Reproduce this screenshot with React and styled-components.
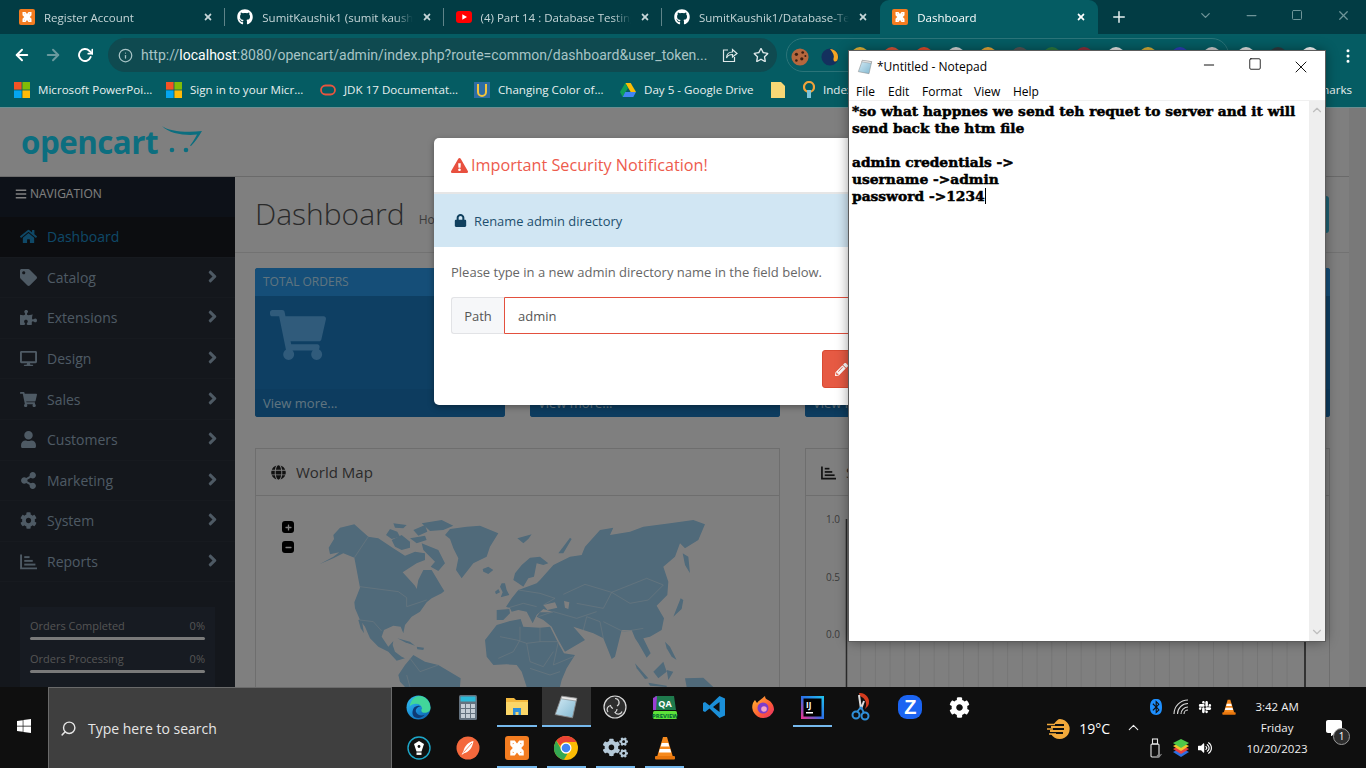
import React from "react";
import styled, { createGlobalStyle } from "styled-components";
import {
  FaHome, FaTag, FaPuzzlePiece, FaDesktop, FaShoppingCart, FaUser, FaShareAlt, FaCog, FaCogs,
  FaBars, FaAngleRight, FaGlobe, FaExclamationTriangle, FaLock, FaPencilAlt,
  FaGithub, FaWindows, FaBluetooth, FaCommentAlt, FaSlack, FaVolumeUp, FaPlus, FaMinus,
  FaRegStar, FaTimes,
} from "react-icons/fa";
import { FiArrowLeft, FiArrowRight, FiRotateCw, FiSearch, FiInfo, FiChevronDown, FiChevronUp, FiMinus, FiSquare, FiX, FiPlus, FiMoreVertical } from "react-icons/fi";

const GlobalStyle = createGlobalStyle`
  html, body { margin: 0; padding: 0; width: 1366px; height: 768px; overflow: hidden; background: #0f0f0f; }
  * { box-sizing: border-box; }
  body { font-family: "Open Sans", "Liberation Sans", sans-serif; }
`;

const Screen = styled.div`
  position: relative;
  width: 1366px;
  height: 768px;
  display: flex;
  flex-direction: column;
  overflow: hidden;
`;

/* ---------- browser chrome ---------- */
const TabStrip = styled.div`
  height: 34px;
  background: #023c44;
  display: flex;
  align-items: flex-end;
  padding-left: 7px;
  flex-shrink: 0;
`;
const Tab = styled.div`
  width: 218.3px;
  height: 34px;
  display: flex;
  align-items: center;
  padding: 0 9px 0 12px;
  color: ${({ $active }) => ($active ? "#ffffff" : "#c6d6d8")};
  background: ${({ $active }) => ($active ? "#055c63" : "transparent")};
  border-radius: ${({ $active }) => ($active ? "9px 9px 0 0" : "0")};
  font-size: 11.5px;
  position: relative;
  &::after {
    content: "";
    display: ${({ $active, $nosep }) => ($active || $nosep ? "none" : "block")};
    position: absolute;
    right: 0;
    top: 8px;
    bottom: 8px;
    width: 1px;
    background: #5f8489;
  }
`;
const TabIcon = styled.span`
  width: 16px;
  height: 16px;
  display: flex;
  align-items: center;
  justify-content: center;
  flex-shrink: 0;
  font-size: 16px;
  color: #fff;
`;
const TabTitle = styled.span`
  margin-left: 9px;
  flex: 1;
  white-space: nowrap;
  overflow: hidden;
  -webkit-mask-image: linear-gradient(to right, #000 88%, transparent 100%);
  mask-image: linear-gradient(to right, #000 88%, transparent 100%);
`;
const TabClose = styled.span`
  width: 16px;
  display: flex;
  justify-content: center;
  font-size: 10px;
  color: ${({ $active }) => ($active ? "#fff" : "#c6d6d8")};
  margin-left: 6px;
`;
const NewTab = styled.span`
  margin-left: 12px;
  height: 34px;
  display: flex;
  align-items: center;
  color: #e7efef;
  font-size: 18px;
`;
const WindowButtons = styled.div`
  margin-left: auto;
  display: flex;
  align-items: center;
  height: 30px;
  color: #6f9599;
  font-size: 15px;
  align-self: flex-start;
`;
const WindowButton = styled.span`
  width: 46px;
  display: flex;
  justify-content: center;
`;

const Toolbar = styled.div`
  height: 42px;
  background: #055c63;
  display: flex;
  align-items: center;
  flex-shrink: 0;
  padding-left: 13px;
`;
const NavButton = styled.span`
  width: ${({ $w }) => $w || 31}px;
  flex-shrink: 0;
  display: flex;
  color: ${({ $off }) => ($off ? "#6a9a9e" : "#ffffff")};
  font-size: 18px;
`;
const UrlPill = styled.div`
  width: 669px;
  height: 34px;
  flex-shrink: 0;
  border-radius: 17px;
  background: #0f4a50;
  display: flex;
  align-items: center;
  padding-left: 10px;
  color: #a8c4c6;
  font-family: "Roboto", sans-serif;
  font-size: 14px;
  white-space: nowrap;
`;
const UrlText = styled.span`
  margin-left: 8px;
  width: 573px;
  letter-spacing: 0.02px;
  b { color: #fff; font-weight: 400; }
`;
const UrlAction = styled.span`
  display: flex;
  width: 31px;
  justify-content: center;
  color: #dfe9ea;
  font-size: 16px;
`;
const ExtensionPill = styled.div`
  margin-left: 9px;
  width: 443px;
  height: 34px;
  flex-shrink: 0;
  border-radius: 17px;
  border: 1px solid #2b7479;
  display: flex;
  align-items: center;
  padding: 2px 0 0 4px;
`;
const ExtDot = styled.span`
  width: 18px;
  height: 18px;
  display: flex;
  border-radius: 50% 50% 2px 2px;
  background: ${({ $c }) => $c};
  flex-shrink: 0;
  margin-right: ${({ $gap }) => ($gap === undefined ? 14 : $gap)}px;
`;
const AfterPill = styled.div`
  display: flex;
  align-items: center;
  margin-left: 8px;
  padding-top: 2px;
  gap: 14px;
  flex-shrink: 0;
`;
const KebabIcon = styled.span`
  margin-left: 6px;
  color: #fff;
  font-size: 18px;
  display: flex;
`;

const BookmarksBar = styled.div`
  height: 32px;
  background: #055c63;
  border-bottom: 1px solid #6b8e91;
  display: flex;
  align-items: center;
  padding: 0 0 4px 14px;
  color: #e8f0f0;
  font-size: 11.6px;
  flex-shrink: 0;
  white-space: nowrap;
`;
const Bookmark = styled.span`
  display: flex;
  align-items: center;
  width: ${({ $w }) => $w}px;
  flex-shrink: 0;
  gap: 8px;
`;
const BookmarkEnd = styled.span`
  margin-left: auto;
  margin-right: 14px;
`;

/* ---------- dimmed admin page ---------- */
const Page = styled.div`
  position: relative;
  flex: 1;
  display: flex;
  min-height: 0;
  overflow: hidden;
  background: #fff;
  color: #555;
`;
const PageMain = styled.div`
  width: 1349px;
  display: flex;
  flex-direction: column;
  flex-shrink: 0;
`;
const PageScroll = styled.div`
  width: 17px;
  background: #f3f3f3;
`;
const AdminHeader = styled.div`
  height: 69px;
  border-bottom: 1px solid #d4d4d4;
  display: flex;
  align-items: center;
  padding-left: 21px;
  flex-shrink: 0;
`;
const LogoText = styled.span`
  font-family: "Open Sans", sans-serif;
  font-weight: 700;
  font-size: 31.3px;
  letter-spacing: -0.5px;
  color: #18dcff;
  line-height: 1;
  margin-top: 2px;
`;
const LogoMark = styled.span`
  display: flex;
  margin: 0 0 4px 3px;
`;
const AdminBody = styled.div`
  flex: 1;
  display: flex;
  min-height: 0;
`;
const Sidebar = styled.aside`
  width: 235px;
  flex-shrink: 0;
  background: #282e38;
`;
const NavHead = styled.div`
  height: 40px;
  background: #1a2230;
  color: #fff;
  font-size: 12px;
  display: flex;
  align-items: flex-start;
  padding: 8px 0 0 15px;
  gap: 3px;
  svg { margin-top: 3px; font-size: 12px; }
`;
const NavItem = styled.div`
  height: 40.6px;
  display: flex;
  align-items: center;
  padding: 0 13px 0 20px;
  font-size: 14px;
  border-bottom: 1px solid #2f353f;
  background: ${({ $active }) => ($active ? "#181b20" : "transparent")};
  color: ${({ $active }) => ($active ? "#1e91cf" : "#9db4c8")};
`;
const NavIcon = styled.span`
  width: 27px;
  display: flex;
  font-size: 17px;
`;
const NavLabel = styled.span`
  flex: 1;
`;
const NavArrow = styled.span`
  display: flex;
  font-size: 19px;
  margin-top: -2px;
`;
const StatsBox = styled.div`
  margin: 25px 20px 0;
  padding: 11px 10px 0;
  background: #2e3644;
  height: 90px;
`;
const StatRow = styled.div`
  display: flex;
  justify-content: space-between;
  font-size: 11px;
  color: #a8a8a8;
  line-height: 16px;
`;
const StatBar = styled.div`
  height: 3px;
  background: #f5f5f5;
  border-radius: 2px;
  margin: 3px 0 11px;
`;
const Content = styled.main`
  flex: 1;
  padding: 0 19px 0 20px;
  min-width: 0;
`;
const PageHead = styled.div`
  height: 76px;
  margin: 0 -19px 15px -20px;
  padding: 16px 20px 0 20px;
  border-bottom: 1px solid #e4e4e4;
  display: flex;
  align-items: flex-start;
`;
const PageTitle = styled.h1`
  margin: 0;
  font-size: 30px;
  font-weight: 300;
  color: #555;
  line-height: 41px;
`;
const Breadcrumb = styled.span`
  margin: 0 0 0 14px;
  font-size: 12px;
  color: #777;
  line-height: 53px;
`;
const DevButton = styled.span`
  margin-left: auto;
  margin-top: 3px;
  width: 40px;
  height: 37px;
  border-radius: 3px;
  background: #3fc4e6;
`;
const TileRow = styled.div`
  display: grid;
  grid-template-columns: repeat(4, 1fr);
  gap: 25px;
`;
const Tile = styled.div`
  height: 149px;
  border-radius: 3px;
  overflow: hidden;
  background: #1c7ec6;
  display: flex;
  flex-direction: column;
  color: #c0e8ff;
  font-size: 12px;
`;
const TileHead = styled.div`
  height: 28px;
  background: #2a9cf0;
  padding: 6px 8px;
  line-height: 16px;
  text-transform: uppercase;
`;
const TileBody = styled.div`
  flex: 1;
  padding: 11px 15px;
  font-size: 56px;
  color: #60b6f6;
  display: flex;
`;
const TileFoot = styled.div`
  height: 28px;
  background: #1a78bf;
  padding: 6px 8px;
  line-height: 16px;
  font-size: 13px;
`;
const PanelRow = styled.div`
  display: grid;
  grid-template-columns: repeat(2, 525px);
  gap: 25px;
  margin-top: 31px;
`;
const Panel = styled.section`
  border: 1px solid #dcdcdc;
  height: 260px;
  position: relative;
`;
const PanelHead = styled.div`
  height: 47px;
  border-bottom: 1px solid #dcdcdc;
  display: flex;
  align-items: center;
  padding-left: 15px;
  gap: 10px;
  font-size: 15px;
  color: #555;
  svg { font-size: 15px; color: #222; }
`;
const MapBody = styled.div`
  padding: 19px 0 0 54px;
`;
const MapZoom = styled.span`
  position: absolute;
  left: 26px;
  top: ${({ $top }) => $top}px;
  width: 12px;
  height: 12px;
  border-radius: 3px;
  background: #000;
  color: #fff;
  display: flex;
  align-items: center;
  justify-content: center;
  font-size: 7px;
`;
const Backdrop = styled.div`
  position: absolute;
  inset: 0;
  background: rgba(0, 0, 0, 0.5);
`;

/* ---------- modal ---------- */
const Modal = styled.div`
  position: absolute;
  left: 434px;
  top: 30px;
  width: 500px;
  height: 267px;
  background: #fff;
  border-radius: 5px;
  box-shadow: 0 2px 6px rgba(0, 0, 0, 0.35);
  overflow: hidden;
  display: flex;
  flex-direction: column;
`;
const ModalTitle = styled.div`
  height: 56px;
  border-bottom: 2px solid #e6e6e6;
  color: #ed5b4d;
  font-size: 16.2px;
  display: flex;
  align-items: center;
  padding: 0 17px;
  gap: 3px;
  svg { font-size: 17px; color: #e8503f; }
`;
const AlertBar = styled.div`
  height: 53px;
  background: #d1e6f3;
  color: #1d4f6e;
  font-size: 12.9px;
  display: flex;
  align-items: center;
  padding-left: 20px;
  gap: 7px;
  svg { font-size: 13px; color: #10405e; }
`;
const ModalBody = styled.div`
  padding: 16px 17px 0;
  font-size: 13px;
  color: #666;
`;
const ModalNote = styled.p`
  margin: 0;
  line-height: 18px;
`;
const InputGroup = styled.div`
  display: flex;
  height: 37px;
  margin-top: 16px;
`;
const InputAddon = styled.span`
  width: 53px;
  background: #f6f7f9;
  border: 1px solid #e2e3e6;
  border-right: 0;
  border-radius: 3px 0 0 3px;
  display: flex;
  align-items: center;
  justify-content: center;
  color: #555;
`;
const InputField = styled.span`
  flex: 1;
  border: 1px solid #e3503e;
  border-radius: 0 3px 3px 0;
  display: flex;
  align-items: center;
  padding-left: 13px;
  color: #555;
`;
const ModalFoot = styled.div`
  display: flex;
  justify-content: flex-end;
  padding: 16px 17px 0;
`;
const DangerButton = styled.span`
  width: 95px;
  height: 38px;
  background: #e65a43;
  border: 1px solid #d94a32;
  border-radius: 3px;
  color: #fff;
  display: flex;
  align-items: center;
  padding-left: 12px;
  font-size: 13px;
`;

/* ---------- notepad window ---------- */
const Notepad = styled.div`
  position: absolute;
  left: 849px;
  top: 51px;
  width: 476px;
  height: 590px;
  background: #fff;
  box-shadow: 0 0 0 1px #5c5c5c, 0 0 12px rgba(0, 0, 0, 0.45);
  display: flex;
  flex-direction: column;
  color: #000;
`;
const NoteTitleBar = styled.div`
  height: 31px;
  display: flex;
  align-items: center;
  padding-left: 8px;
  font-family: "Open Sans", sans-serif;
  font-size: 12px;
  gap: 4px;
`;
const NoteControls = styled.div`
  margin-left: auto;
  display: flex;
  margin-right: 1px;
`;
const NoteControl = styled.span`
  width: 46px;
  display: flex;
  justify-content: center;
  font-size: ${({ $s }) => $s || 16}px;
`;
const NoteMenu = styled.div`
  height: 19px;
  display: flex;
  align-items: center;
  font-size: 12px;
  padding-left: 7px;
  border-bottom: 1px solid #f0f0f0;
`;
const NoteMenuItem = styled.span`
  width: ${({ $w }) => $w}px;
`;
const NoteBody = styled.div`
  flex: 1;
  display: flex;
  min-height: 0;
`;
const NoteText = styled.pre`
  flex: 1;
  margin: 0;
  padding: 2px 0 0 3px;
  font-family: "DejaVu Serif", "Liberation Serif", serif;
  font-weight: 700;
  font-size: 13.8px;
  line-height: 17px;
  white-space: pre;
  -webkit-text-stroke: 0.5px #000;
`;
const Caret = styled.span`
  display: inline-block;
  width: 1px;
  height: 16px;
  background: #000;
  vertical-align: -3px;
`;
const NoteScroll = styled.div`
  width: 16px;
  background: #eeeeee;
  display: flex;
  flex-direction: column;
  justify-content: space-between;
  align-items: center;
  color: #bdbdbd;
  font-size: 14px;
  padding: 2px 0;
`;

/* ---------- taskbar ---------- */
const Taskbar = styled.div`
  height: 81px;
  flex-shrink: 0;
  background: #0f0f0f;
  display: flex;
  color: #fff;
`;
const StartButton = styled.div`
  width: 48px;
  display: flex;
  align-items: center;
  justify-content: center;
  font-size: 16px;
  padding-bottom: 4px;
`;
const SearchBox = styled.div`
  width: 344px;
  background: #3f3f3f;
  border: 1px solid #6a6a6a;
  border-bottom: 0;
  display: flex;
  align-items: center;
  padding: 0 0 0 11px;
  gap: 11px;
  font-size: 14px;
  color: #e6e6e6;
  svg { font-size: 17px; transform: scaleX(-1); }
`;
const TaskGrid = styled.div`
  display: grid;
  grid-template-columns: repeat(12, 49.2px);
  grid-template-rows: 40px 41px;
  margin-left: 2px;
`;
const TaskCell = styled.div`
  position: relative;
  display: flex;
  align-items: center;
  justify-content: center;
  background: ${({ $active }) => ($active ? "#333333" : "transparent")};
  &::after {
    content: "";
    display: ${({ $open }) => ($open ? "block" : "none")};
    position: absolute;
    left: ${({ $active }) => ($active ? 0 : 5)}px;
    right: ${({ $active }) => ($active ? 0 : 5)}px;
    bottom: 0;
    height: 2px;
    background: #76b9ed;
  }
`;
const Weather = styled.div`
  margin-left: 63px;
  display: flex;
  align-items: center;
  gap: 6px;
  font-size: 14px;
  padding-top: 2px;
`;
const TrayChevron = styled.span`
  margin-left: 15px;
  display: flex;
  align-self: center;
  font-size: 17px;
  color: #eee;
`;
const Tray = styled.div`
  margin-left: 2px;
  width: 97px;
  display: grid;
  grid-template-columns: repeat(4, 24.3px);
  grid-template-rows: 40px 41px;
  justify-items: center;
  align-items: center;
  font-size: 14px;
`;
const Clock = styled.div`
  width: 72px;
  display: flex;
  flex-direction: column;
  align-items: center;
  justify-content: center;
  gap: 5px;
  font-size: 11.5px;
  line-height: 16px;
  color: #f0f0f0;
`;
const Notify = styled.div`
  position: relative;
  margin-left: 13px;
  align-self: center;
  font-size: 16px;
  display: flex;
`;
const NotifyBadge = styled.span`
  position: absolute;
  right: -8px;
  bottom: -9px;
  width: 17px;
  height: 17px;
  border-radius: 50%;
  background: #2d2d2d;
  border: 1px solid #999;
  font-size: 10px;
  display: flex;
  align-items: center;
  justify-content: center;
`;

/* ---------- drawn icons ---------- */
const Xampp = ({ size = 16 }) => (
  <svg width={size} height={size} viewBox="0 0 16 16">
    <rect width="16" height="16" rx="2" fill="#f37c20" />
    <path d="M3.5 3h3L8 5l1.5-2h3v3.2L10.8 8l1.7 1.8V13h-3L8 11l-1.5 2h-3V9.800L5.200 8 3.500 6.200z" fill="#fff" />
    <path d="M5.200 4.600h.8L5.200 5.600zM10 4.600h.8v1zM5.200 11.400h.8l-.8-1zM10 11.400h.8v-1z" fill="#f37c20" />
  </svg>
);
const YouTube = () => (
  <svg width="16" height="12" viewBox="0 0 16 12">
    <rect width="16" height="12" rx="3" fill="#f00" />
    <path d="M6.300 3.300v5.400L11 6z" fill="#fff" />
  </svg>
);
const MsLogo = () => (
  <svg width="16" height="16" viewBox="0 0 16 16">
    <rect width="7.600" height="7.600" fill="#f35325" />
    <rect x="8.400" width="7.600" height="7.600" fill="#81bc06" />
    <rect y="8.400" width="7.600" height="7.600" fill="#05a6f0" />
    <rect x="8.400" y="8.400" width="7.600" height="7.600" fill="#ffba08" />
  </svg>
);
const OracleOval = () => (
  <svg width="16" height="12" viewBox="0 0 16 12">
    <rect x="1" y="1.500" width="14" height="9" rx="4.500" fill="none" stroke="#e8553f" strokeWidth="1.800" />
  </svg>
);
const UdemyBook = () => (
  <svg width="16" height="16" viewBox="0 0 16 16">
    <rect width="16" height="16" fill="#2e6da4" />
    <path d="M4 2v8a4 4 0 0 0 8 0V2" fill="none" stroke="#f3c53c" strokeWidth="2" />
  </svg>
);
const DriveIcon = () => (
  <svg width="16" height="14" viewBox="0 0 16 14">
    <path d="M5.300 0h5.400l5.300 9h-5.300z" fill="#fbbc04" />
    <path d="M5.300 0L0 9l2.700 5 5.300-9z" fill="#0f9d58" />
    <path d="M2.700 14h10.600l2.700-5H5.300z" fill="#4285f4" />
  </svg>
);
const FolderNote = () => (
  <svg width="14" height="16" viewBox="0 0 14 16">
    <path d="M0 0h10l4 4v12H0z" fill="#f8d775" />
  </svg>
);
const PinIcon = () => (
  <svg width="12" height="18" viewBox="0 0 12 18">
    <circle cx="6" cy="6" r="5" fill="none" stroke="#f2a33a" strokeWidth="2.200" />
    <rect x="4" y="9" width="4" height="8" fill="#7ec4d8" />
  </svg>
);
const ShareIcon = () => (
  <svg width="16" height="16" viewBox="0 0 16 16" fill="none" stroke="#dfe9ea" strokeWidth="1.200">
    <path d="M6 3H1.500v11.500h11V10" />
    <path d="M4.500 11c0-4 3-6 6-6V2.500L15 6.500 10.500 10V7.500c-2.500 0-5 1-6 3.500z" />
  </svg>
);
const Cookie = () => (
  <svg width="20" height="20" viewBox="0 0 20 20">
    <circle cx="10" cy="10" r="9.500" fill="#b5673e" />
    <circle cx="6" cy="7" r="1.800" fill="#3c1f12" /><circle cx="13" cy="5" r="1.500" fill="#3c1f12" />
    <circle cx="12" cy="12" r="1.800" fill="#3c1f12" /><circle cx="6" cy="14" r="1.400" fill="#3c1f12" />
    <circle cx="16" cy="9" r="1.100" fill="#3c1f12" />
  </svg>
);
const SwirlExt = () => (
  <svg width="20" height="20" viewBox="0 0 20 20">
    <circle cx="10" cy="10" r="9.500" fill="#14305e" />
    <path d="M10 1a9 9 0 0 1 8 13c-2 2-5 1-4-3 1-3-1-6-4-10z" fill="#f5a623" />
  </svg>
);
const PadIcon = ({ size = 16 }) => (
  <svg width={size} height={size} viewBox="0 0 24 24">
    <defs>
      <linearGradient id={`pad${size}`} x1="0" y1="0" x2="1" y2="1">
        <stop offset="0" stopColor="#d6ecf6" /><stop offset="1" stopColor="#7fb6cf" />
      </linearGradient>
    </defs>
    <path d="M8 2l14 2-4 18-16-3z" fill={`url(#pad${size})`} stroke="#8a8a8a" strokeWidth="0.800" />
    <path d="M8 2l14 2-.6 2.500L7.300 4.400z" fill="#e9e9e9" stroke="#777" strokeWidth="0.500" />
  </svg>
);
const AxisBars = () => (
  <svg width="1em" height="1em" viewBox="0 0 16 16" fill="currentColor">
    <path d="M1 1.500v13h15" fill="none" stroke="currentColor" strokeWidth="1.800" />
    <rect x="4" y="3" width="5" height="1.800" /><rect x="4" y="6.500" width="8" height="1.800" /><rect x="4" y="10" width="10.500" height="1.800" />
  </svg>
);
const EdgeIcon = () => (
  <svg width="25" height="25" viewBox="0 0 24 24">
    <defs>
      <linearGradient id="edgeA" x1="0" y1="0" x2="1" y2="1">
        <stop offset="0" stopColor="#35c1f1" /><stop offset="0.500" stopColor="#1b8fd8" /><stop offset="1" stopColor="#0c59a4" />
      </linearGradient>
    </defs>
    <circle cx="12" cy="12" r="11.500" fill="url(#edgeA)" />
    <path d="M13 1a11 11 0 0 1 10.500 11.500c0 3-3 5-6.500 4.500-3-.5-2.500-3-1.500-4-.5-3-3-4.500-6-4.500C7 8.500 5 9.500 3.500 11 4.500 5 8 1 13 1z" fill="#42d69a" />
    <path d="M9.500 16c1 3 5 4.500 8.500 3-2 3-7 4-10 2-2-1.500-2.500-5-.5-8.500 1.500-2 4.500-3 7-1.500-3 0-5.500 2-5 5z" fill="#0e3a75" />
  </svg>
);
const CalcIcon = () => (
  <svg width="18" height="25" viewBox="0 0 18 25">
    <rect width="18" height="25" rx="1.500" fill="#64727f" />
    <rect x="1.500" y="1.500" width="15" height="5" fill="#2bb9d8" />
    {[0, 1, 2].map((c) =>
      [0, 1, 2].map((r) => <rect key={`${c}${r}`} x={2 + c * 5} y={9 + r * 5} width="4" height="4" fill="#c5ced6" />)
    )}
  </svg>
);
const FolderIcon = () => (
  <svg width="22" height="20" viewBox="0 0 22 20">
    <path d="M0 1h8l2 2h12v15H0z" fill="#f3b93f" />
    <path d="M0 5h22v13H0z" fill="#fbd668" />
    <path d="M7 11h8v7h-2.500v-3h-3v3H7z" fill="#2f8fd8" />
  </svg>
);
const ObsIcon = () => (
  <svg width="24" height="24" viewBox="0 0 24 24" fill="none" stroke="#d8d8d8" strokeWidth="1.200">
    <circle cx="12" cy="12" r="11" fill="#2d2d2d" />
    <path d="M12 3.500a4 4 0 0 1 2 7.500M5 17a4 4 0 0 1 2.500-6.500 4 4 0 0 0 2.500 3M19 16.500a4 4 0 0 1-7 1 4 4 0 0 0 2-3.500" />
  </svg>
);
const QaIcon = () => (
  <svg width="26" height="26" viewBox="0 0 26 26">
    <path d="M3 2h19l2 14H2z" fill="#1f7a4d" />
    <path d="M1 4l4-2-1 14H1z" fill="#9b3fd4" />
    <text x="13" y="13" fontSize="9" fontWeight="700" fill="#fff" textAnchor="middle" fontFamily="Open Sans">QA</text>
    <rect x="1" y="17" width="24" height="8" rx="1.500" fill="#5de23a" />
    <text x="13" y="23.500" fontSize="6" fontWeight="700" fill="#063" textAnchor="middle" fontFamily="Open Sans">PREVIEW</text>
  </svg>
);
const CodeIcon = () => (
  <svg width="24" height="24" viewBox="0 0 24 24">
    <path d="M17.500 1L23 3.500v17L17.500 23l-10-9.500L3 17l-2-1V8l2-1 4.500 3.500zM17.500 7L11 12l6.500 5z" fill="#1b8fd8" />
  </svg>
);
const FoxIcon = () => (
  <svg width="24" height="24" viewBox="0 0 24 24">
    <defs>
      <linearGradient id="foxA" x1="0" y1="0" x2="1" y2="1">
        <stop offset="0" stopColor="#ffbd2e" /><stop offset="0.600" stopColor="#ff5a36" /><stop offset="1" stopColor="#e32b73" />
      </linearGradient>
    </defs>
    <path d="M12 23a11 11 0 0 1-10-15c1-2 2-3 2-3l2 3c2-3 5-4 8-7 0 2 1 3 3 4 4 2 6 6 6 10a11 11 0 0 1-11 8z" fill="url(#foxA)" />
    <circle cx="12" cy="13" r="5.500" fill="#7d3cc9" />
    <circle cx="13" cy="14" r="2.800" fill="#f5a5c8" />
  </svg>
);
const IdeaIcon = () => (
  <svg width="23" height="23" viewBox="0 0 23 23">
    <defs>
      <linearGradient id="ideaA" x1="0" y1="1" x2="1" y2="0">
        <stop offset="0" stopColor="#f72f8e" /><stop offset="0.500" stopColor="#2b6fe6" /><stop offset="1" stopColor="#20c8f0" />
      </linearGradient>
    </defs>
    <rect width="23" height="23" fill="url(#ideaA)" />
    <rect x="2.500" y="2.500" width="18" height="18" fill="#000" />
    <text x="5" y="12" fontSize="8" fontWeight="700" fill="#fff" fontFamily="Open Sans">IJ</text>
    <rect x="5" y="16" width="7" height="1.500" fill="#fff" />
  </svg>
);
const SnipIcon = () => (
  <svg width="20" height="30" viewBox="0 0 20 30">
    <path d="M8 1a9 9 0 0 1 9 13l-3 3c3-6 0-11-5-13z" fill="#d43b1e" />
    <path d="M8 3l2 14M13 9l-3 8" stroke="#ddd" strokeWidth="2" />
    <circle cx="5" cy="23" r="3.500" fill="none" stroke="#2f8fd8" strokeWidth="2" />
    <circle cx="14" cy="24" r="3.500" fill="none" stroke="#2f8fd8" strokeWidth="2" />
    <path d="M6 20l4-5M13 21l-3-6" stroke="#2f8fd8" strokeWidth="1.800" />
  </svg>
);
const ZoomZ = styled.span`
  width: 24px;
  height: 24px;
  border-radius: 9px;
  background: #1b64f2;
  color: #fff;
  font: 700 20px "Liberation Sans", sans-serif;
  display: flex;
  align-items: center;
  justify-content: center;
`;
const PenIcon = () => (
  <svg width="24" height="24" viewBox="0 0 24 24">
    <circle cx="12" cy="12" r="11" fill="#111" stroke="#1da7c9" strokeWidth="1.400" />
    <path d="M7 8l5-3 5 3-2.500 7.500h-5z" fill="#fff" />
    <circle cx="12" cy="10.500" r="1.400" fill="#111" />
    <rect x="9.500" y="16.500" width="5" height="2.400" fill="#fff" />
  </svg>
);
const FeatherIcon = () => (
  <svg width="24" height="24" viewBox="0 0 24 24">
    <circle cx="12" cy="12" r="11.500" fill="#f4683c" />
    <path d="M17.500 5c-5 1-9 5-10 10l-2 4 3-2c5-1 8-6 9-12z" fill="#fff" />
    <path d="M16 7l-8.500 9.500" stroke="#f4683c" strokeWidth="0.800" />
  </svg>
);
const ChromeIcon = () => (
  <svg width="24" height="24" viewBox="0 0 24 24">
    <circle cx="12" cy="12" r="12" fill="#fbbc04" />
    <path d="M12 0a12 12 0 0 1 10.400 6H12a6 6 0 0 0-5.700 4L2.300 4.800A12 12 0 0 1 12 0z" fill="#ea4335" />
    <path d="M2.300 4.800l5 8.600a6 6 0 0 0 6.200 4.400L9.800 23.800A12 12 0 0 1 2.300 4.800z" fill="#34a853" />
    <circle cx="12" cy="12" r="5.500" fill="#fff" /><circle cx="12" cy="12" r="4.300" fill="#4285f4" />
  </svg>
);
const Cone = ({ size = 24 }) => (
  <svg width={size} height={size} viewBox="0 0 24 24">
    <path d="M10 1h4l6 20H4z" fill="#f68a1e" />
    <path d="M8.700 7h6.600l1 3.500H7.700zM6.800 13h10.400l1 3.500H5.800z" fill="#fff" />
    <rect x="2" y="20" width="20" height="3.500" rx="1" fill="#e8760c" />
  </svg>
);
const GearsIcon = styled(FaCogs)`
  font-size: 25px;
  color: #b5c9d8;
`;
const WhiteGear = styled(FaCog)`
  font-size: 21px;
  color: #fff;
`;
const WeatherIcon = () => (
  <svg width="26" height="26" viewBox="0 0 26 26">
    <path d="M13 3a10 10 0 1 1-9 15h12v-2H3v-2h14v-2H4v-2h13V8H7c2-3 4-5 6-5z" fill="#f2a93b" />
    <path d="M0 8.500h8M0 13h6M2 18h7" stroke="#f2a93b" strokeWidth="1.400" />
  </svg>
);
const WifiIcon = () => (
  <svg width="16" height="16" viewBox="0 0 16 16" fill="none" stroke="#d8d8d8" strokeWidth="1.100">
    <path d="M1 15A14 14 0 0 1 15 1M4.500 15A10.500 10.500 0 0 1 15 4.500M8 15a7 7 0 0 1 7-7M11 15a4 4 0 0 1 4-4" />
  </svg>
);
const UsbIcon = () => (
  <svg width="12" height="20" viewBox="0 0 12 20" fill="none" stroke="#e8e8e8" strokeWidth="1.100">
    <rect x="1" y="6" width="8" height="13" rx="1" /><rect x="2.500" y="1" width="5" height="5" />
    <path d="M7 17l2 2 2.500-3" stroke="#888" />
  </svg>
);
const BlueStacks = () => (
  <svg width="18" height="20" viewBox="0 0 18 20">
    <path d="M9 10l8 4-8 5-8-5z" fill="#2d6fe0" />
    <path d="M9 7l8 4-8 5-8-5z" fill="#e84040" />
    <path d="M9 4l8 4-8 5-8-5z" fill="#f2c32c" />
    <path d="M9 1l8 4-8 5-8-5z" fill="#4ec84a" />
  </svg>
);
const Swoosh = () => (
  <svg width="42" height="30" viewBox="0 0 42 30">
    <path d="M1 1c6 5 24 7 40 5-3 5-7 11-11 15l-1-.5c3-4 5-7 7-11C26 11 8 9 1 1z" fill="#18dcff" />
    <circle cx="11" cy="25" r="2.300" fill="#18dcff" /><circle cx="25" cy="25" r="2.300" fill="#18dcff" />
  </svg>
);

/* ---------- map and chart ---------- */
const landShapes = [
  "M56 98L72 72 70 60 90 38 133 28 175 65 205 70 250 100 285 122 315 110 345 115 345 135 320 145 278 172 315 212 320 222 325 195 340 165 365 165 395 215 403 228 395 235 365 250 350 262 330 290 305 305 285 330 280 355 272 335 250 332 222 345 215 365 235 395 250 378 248 390 255 410 275 425 285 430 260 437 235 410 205 395 180 370 165 335 150 315 135 280 133 262 150 218 140 165 133 128 100 115 70 130 28 148 70 125 88 112 60 118Z",
  "M145 315L155 312 162 355 152 340Z",
  "M228 60L240 42 262 50 270 65 245 72Z",
  "M250 25L290 30 280 40 255 38Z",
  "M245 75L275 60 300 80 300 98 275 105 255 95Z",
  "M310 45L345 30 352 50 325 62Z",
  "M335 25L395 15 430 32 400 45 360 48Z",
  "M300 70L345 62 350 75 320 85Z",
  "M335 85L385 105 405 145 385 168 362 155 375 140 340 105Z",
  "M405 60L420 42 470 35 510 32 565 55 540 95 530 125 490 145 455 190 438 165 445 130 430 100 420 72Z",
  "M518 162L535 155 550 165 535 177 520 170Z",
  "M575 205L585 205 590 225 598 240 572 247 578 232 570 215Z",
  "M555 230L565 222 570 232 558 238Z",
  "M622 70L665 58 655 72 640 85Z",
  "M610 195L615 175 635 150 660 128 690 125 715 145 700 150 680 145 672 185 655 190 640 215 625 205Z",
  "M745 115L780 68 785 72 760 115Z",
  "M690 195L730 150 780 125 815 120 825 95 870 45 910 38 900 60 960 50 1000 35 1080 25 1150 15 1185 28 1165 75 1125 100 1110 85 1095 125 1060 155 1075 200 1072 240 1040 272 1062 310 1055 345 1020 365 1000 370 1022 415 1010 428 985 385 975 370 965 345 935 345 915 425 905 432 880 370 850 355 820 345 790 335 825 375 765 410 745 375 725 335 700 315 680 305 690 292 730 292 700 282 680 300 668 325 650 290 625 285 605 290 600 280 588 275 605 250 625 225 680 205Z",
  "M560 285L598 282 600 295 580 315 560 315Z",
  "M525 375L560 330 600 318 632 312 640 335 690 338 720 335 745 385 762 415 795 420 770 460 755 495 750 516 650 516 635 470 620 450 590 448 550 450 530 425Z",
  "M265 480L285 450 310 420 345 440 385 450 452 490 450 516 285 516 270 500Z",
  "M262 370L300 380 315 392 285 382Z",
  "M320 395L342 398 340 405 322 403Z",
  "M1118 115L1135 125 1140 175 1125 150Z",
  "M1090 305L1115 282 1120 255 1112 250 1100 280Z",
  "M1030 470L1060 440 1070 470 1045 490Z",
  "M975 445L1015 490 1005 492 980 460Z",
  "M1065 380L1080 395 1100 435 1085 425 1070 400Z",
  "M1070 465L1090 470 1075 495Z",
  "M1125 490L1180 488 1210 516 1130 516Z",
  "M1015 503L1070 512 1070 516 1020 512Z",
];
const borderLines = [
  "M175 65L133 128",
  "M150 215L265 230 290 248 290 275 350 255",
  "M150 315L190 320 215 348",
  "M905 232L1010 190 1060 210 1015 255 960 265 905 232",
  "M760 238L825 208 905 232 880 280 800 265",
  "M685 305L730 290 800 310 860 290",
  "M820 345L830 305 870 320 880 370",
  "M880 320L940 350 1000 340",
  "M625 225L690 235 735 250 700 270",
  "M590 280L640 265 680 275",
  "M570 365L620 375 650 385 690 380 690 338",
  "M630 335L630 375 610 410 565 430",
  "M650 385L660 440 700 455 730 410",
  "M690 380L745 380 730 450 790 425",
  "M660 460L720 480 750 470",
  "M300 430L330 470 385 450",
  "M290 480L300 516",
];

const WorldMap = () => (
  <svg width="410" height="172" viewBox="0 0 1230 516">
    {landShapes.map((d, i) => (
      <path key={i} d={d} fill="#a0d4f4" />
    ))}
    <path d="M700 270L735 262 742 278 712 285Z" fill="#fff" />
    <path d="M762 258L778 262 775 282 765 278Z" fill="#fff" />
    {borderLines.map((d, i) => (
      <path key={i} d={d} fill="none" stroke="#d6f0ff" strokeWidth="2" />
    ))}
  </svg>
);

const ChartLabel = styled.text`
  font: 10px "Open Sans", sans-serif;
  fill: #777;
`;
const gridLines = Array.from({ length: 31 }, (_, i) => 846 + i * 14.7);

const SalesChart = () => (
  <svg width="523" height="195" viewBox="806 497 523 195">
    {gridLines.map((x) => (
      <line key={x} x1={x} x2={x} y1="520" y2="692" stroke="#ececec" />
    ))}
    <line x1="846.500" x2="846.500" y1="520" y2="692" stroke="#555" strokeWidth="1.500" />
    <line x1="1305" x2="1305" y1="520" y2="692" stroke="#333" strokeWidth="1.500" />
    <ChartLabel x="826" y="524">1.0</ChartLabel>
    <ChartLabel x="826" y="582">0.5</ChartLabel>
    <ChartLabel x="826" y="639">0.0</ChartLabel>
  </svg>
);

/* ---------- data ---------- */
const tabs = [
  { title: "Register Account", icon: <Xampp /> },
  { title: "SumitKaushik1 (sumit kaushik)", icon: <FaGithub /> },
  { title: "(4) Part 14 : Database Testing", icon: <YouTube /> },
  { title: "SumitKaushik1/Database-Testing", icon: <FaGithub />, nosep: true },
  { title: "Dashboard", icon: <Xampp />, active: true },
];
const bookmarks = [
  { label: "Microsoft PowerPoi...", icon: <MsLogo />, w: 152 },
  { label: "Sign in to your Micr...", icon: <MsLogo />, w: 154 },
  { label: "JDK 17 Documentat...", icon: <OracleOval />, w: 154 },
  { label: "Changing Color of...", icon: <UdemyBook />, w: 146 },
  { label: "Day 5 - Google Drive", icon: <DriveIcon />, w: 151 },
  { label: "", icon: <FolderNote />, w: 32 },
  { label: "Index", icon: <PinIcon />, w: 60 },
];
const navItems = [
  { label: "Catalog", icon: <FaTag /> },
  { label: "Extensions", icon: <FaPuzzlePiece /> },
  { label: "Design", icon: <FaDesktop /> },
  { label: "Sales", icon: <FaShoppingCart /> },
  { label: "Customers", icon: <FaUser /> },
  { label: "Marketing", icon: <FaShareAlt /> },
  { label: "System", icon: <FaCog /> },
  { label: "Reports", icon: <AxisBars /> },
];
const tiles = ["Total Orders", "", "", ""];
const extColors = ["#e8b83a", "#d8553a", "#e14b2b", "#d8d8d8", "#e8a93a", "#555", "#2d7a3e", "#8d2f3b", "#e8e8e8", "#d8b13a", "#2d3fb8", "#d0d0d0"];
const taskIcons = [
  { el: <EdgeIcon /> }, { el: <CalcIcon /> }, { el: <FolderIcon />, open: true }, { el: <PadIcon size={26} />, open: true, active: true },
  { el: <ObsIcon /> }, { el: <QaIcon /> }, { el: <CodeIcon /> }, { el: <FoxIcon /> }, { el: <IdeaIcon />, open: true },
  { el: <SnipIcon /> }, { el: <ZoomZ>Z</ZoomZ> }, { el: <WhiteGear /> },
  { el: <PenIcon /> }, { el: <FeatherIcon /> }, { el: <Xampp size={24} />, open: true }, { el: <ChromeIcon />, open: true },
  { el: <GearsIcon />, open: true }, { el: <Cone />, open: true },
];

const App = () => (
  <Screen>
    <GlobalStyle />
    <TabStrip>
      {tabs.map((t) => (
        <Tab key={t.title} $active={t.active} $nosep={t.nosep}>
          <TabIcon>{t.icon}</TabIcon>
          <TabTitle>{t.title}</TabTitle>
          <TabClose $active={t.active}><FaTimes /></TabClose>
        </Tab>
      ))}
      <NewTab><FiPlus /></NewTab>
      <WindowButtons>
        <WindowButton><FiChevronDown /></WindowButton>
        <WindowButton><FiMinus /></WindowButton>
        <WindowButton><FiSquare size={12} /></WindowButton>
        <WindowButton><FiX /></WindowButton>
      </WindowButtons>
    </TabStrip>

    <Toolbar>
      <NavButton><FiArrowLeft strokeWidth={2.6} /></NavButton>
      <NavButton $off $w={33}><FiArrowRight strokeWidth={2.6} /></NavButton>
      <NavButton $w={31}><FiRotateCw strokeWidth={2.8} size={16} /></NavButton>
      <UrlPill>
        <FiInfo size={15} />
        <UrlText>http://<b>localhost</b>:8080/opencart/admin/index.php?route=common/dashboard&amp;user_token...</UrlText>
        <UrlAction><ShareIcon /></UrlAction>
        <UrlAction><FaRegStar /></UrlAction>
      </UrlPill>
      <ExtensionPill>
        <ExtDot $c="transparent" $gap={12}><Cookie /></ExtDot>
        <ExtDot $c="transparent" $gap={12}><SwirlExt /></ExtDot>
        {extColors.map((c, i) => (
          <ExtDot key={i} $c={c} />
        ))}
      </ExtensionPill>
      <AfterPill>
        <ExtDot $c="#e4e4e4" $gap={0} />
        <ExtDot $c="#2f3a3f" $gap={0} />
        <ExtDot $c="#ffffff" $gap={0} />
        <KebabIcon><FiMoreVertical /></KebabIcon>
      </AfterPill>
    </Toolbar>

    <BookmarksBar>
      {bookmarks.map((b, i) => (
        <Bookmark key={i} $w={b.w}>{b.icon}{b.label}</Bookmark>
      ))}
      <BookmarkEnd>Other bookmarks</BookmarkEnd>
    </BookmarksBar>

    <Page>
      <PageMain>
        <AdminHeader>
          <LogoText>opencart</LogoText>
          <LogoMark><Swoosh /></LogoMark>
        </AdminHeader>
        <AdminBody>
          <Sidebar>
            <NavHead><FaBars />NAVIGATION</NavHead>
            <NavItem $active>
              <NavIcon><FaHome /></NavIcon>
              <NavLabel>Dashboard</NavLabel>
            </NavItem>
            {navItems.map((n) => (
              <NavItem key={n.label}>
                <NavIcon>{n.icon}</NavIcon>
                <NavLabel>{n.label}</NavLabel>
                <NavArrow><FaAngleRight /></NavArrow>
              </NavItem>
            ))}
            <StatsBox>
              <StatRow><span>Orders Completed</span><span>0%</span></StatRow>
              <StatBar />
              <StatRow><span>Orders Processing</span><span>0%</span></StatRow>
              <StatBar />
            </StatsBox>
          </Sidebar>
          <Content>
            <PageHead>
              <PageTitle>Dashboard</PageTitle>
              <Breadcrumb>Home</Breadcrumb>
              <DevButton />
            </PageHead>
            <TileRow>
              {tiles.map((t, i) => (
                <Tile key={i}>
                  <TileHead>{t}</TileHead>
                  <TileBody><FaShoppingCart /></TileBody>
                  <TileFoot>View more...</TileFoot>
                </Tile>
              ))}
            </TileRow>
            <PanelRow>
              <Panel>
                <PanelHead><FaGlobe />World Map</PanelHead>
                <MapBody><WorldMap /></MapBody>
                <MapZoom $top={72}><FaPlus /></MapZoom>
                <MapZoom $top={92}><FaMinus /></MapZoom>
              </Panel>
              <Panel>
                <PanelHead><AxisBars />Sales Analytics</PanelHead>
                <SalesChart />
              </Panel>
            </PanelRow>
          </Content>
        </AdminBody>
      </PageMain>
      <PageScroll />
      <Backdrop />
      <Modal>
        <ModalTitle><FaExclamationTriangle />Important Security Notification!</ModalTitle>
        <AlertBar><FaLock />Rename admin directory</AlertBar>
        <ModalBody>
          <ModalNote>Please type in a new admin directory name in the field below.</ModalNote>
          <InputGroup>
            <InputAddon>Path</InputAddon>
            <InputField>admin</InputField>
          </InputGroup>
        </ModalBody>
        <ModalFoot>
          <DangerButton><FaPencilAlt /></DangerButton>
        </ModalFoot>
      </Modal>
    </Page>

    <Taskbar>
      <StartButton><FaWindows /></StartButton>
      <SearchBox><FiSearch />Type here to search</SearchBox>
      <TaskGrid>
        {taskIcons.map((t, i) => (
          <TaskCell key={i} $open={t.open} $active={t.active}>{t.el}</TaskCell>
        ))}
      </TaskGrid>
      <Weather><WeatherIcon />19°C</Weather>
      <TrayChevron><FiChevronUp strokeWidth={1.5} /></TrayChevron>
      <Tray>
        <FaBluetooth color="#1e90ff" size={16} />
        <WifiIcon />
        <FaSlack />
        <Cone size={16} />
        <UsbIcon />
        <BlueStacks />
        <FaVolumeUp />
      </Tray>
      <Clock>
        <span>3:42 AM</span>
        <span>Friday</span>
        <span>10/20/2023</span>
      </Clock>
      <Notify>
        <FaCommentAlt />
        <NotifyBadge>1</NotifyBadge>
      </Notify>
    </Taskbar>

    <Notepad>
      <NoteTitleBar>
        <PadIcon />
        *Untitled - Notepad
        <NoteControls>
          <NoteControl><FiMinus strokeWidth={1.4} /></NoteControl>
          <NoteControl $s={14}><FiSquare strokeWidth={1.4} /></NoteControl>
          <NoteControl $s={20}><FiX strokeWidth={1.1} /></NoteControl>
        </NoteControls>
      </NoteTitleBar>
      <NoteMenu>
        <NoteMenuItem $w={32}>File</NoteMenuItem>
        <NoteMenuItem $w={34}>Edit</NoteMenuItem>
        <NoteMenuItem $w={52}>Format</NoteMenuItem>
        <NoteMenuItem $w={39}>View</NoteMenuItem>
        <NoteMenuItem $w={40}>Help</NoteMenuItem>
      </NoteMenu>
      <NoteBody>
        <NoteText>{`*so what happnes we send teh requet to server and it will
send back the htm file

admin credentials ->
username ->admin
password ->1234`}<Caret /></NoteText>
        <NoteScroll><FiChevronUp /><FiChevronDown /></NoteScroll>
      </NoteBody>
    </Notepad>
  </Screen>
);

export default App;
